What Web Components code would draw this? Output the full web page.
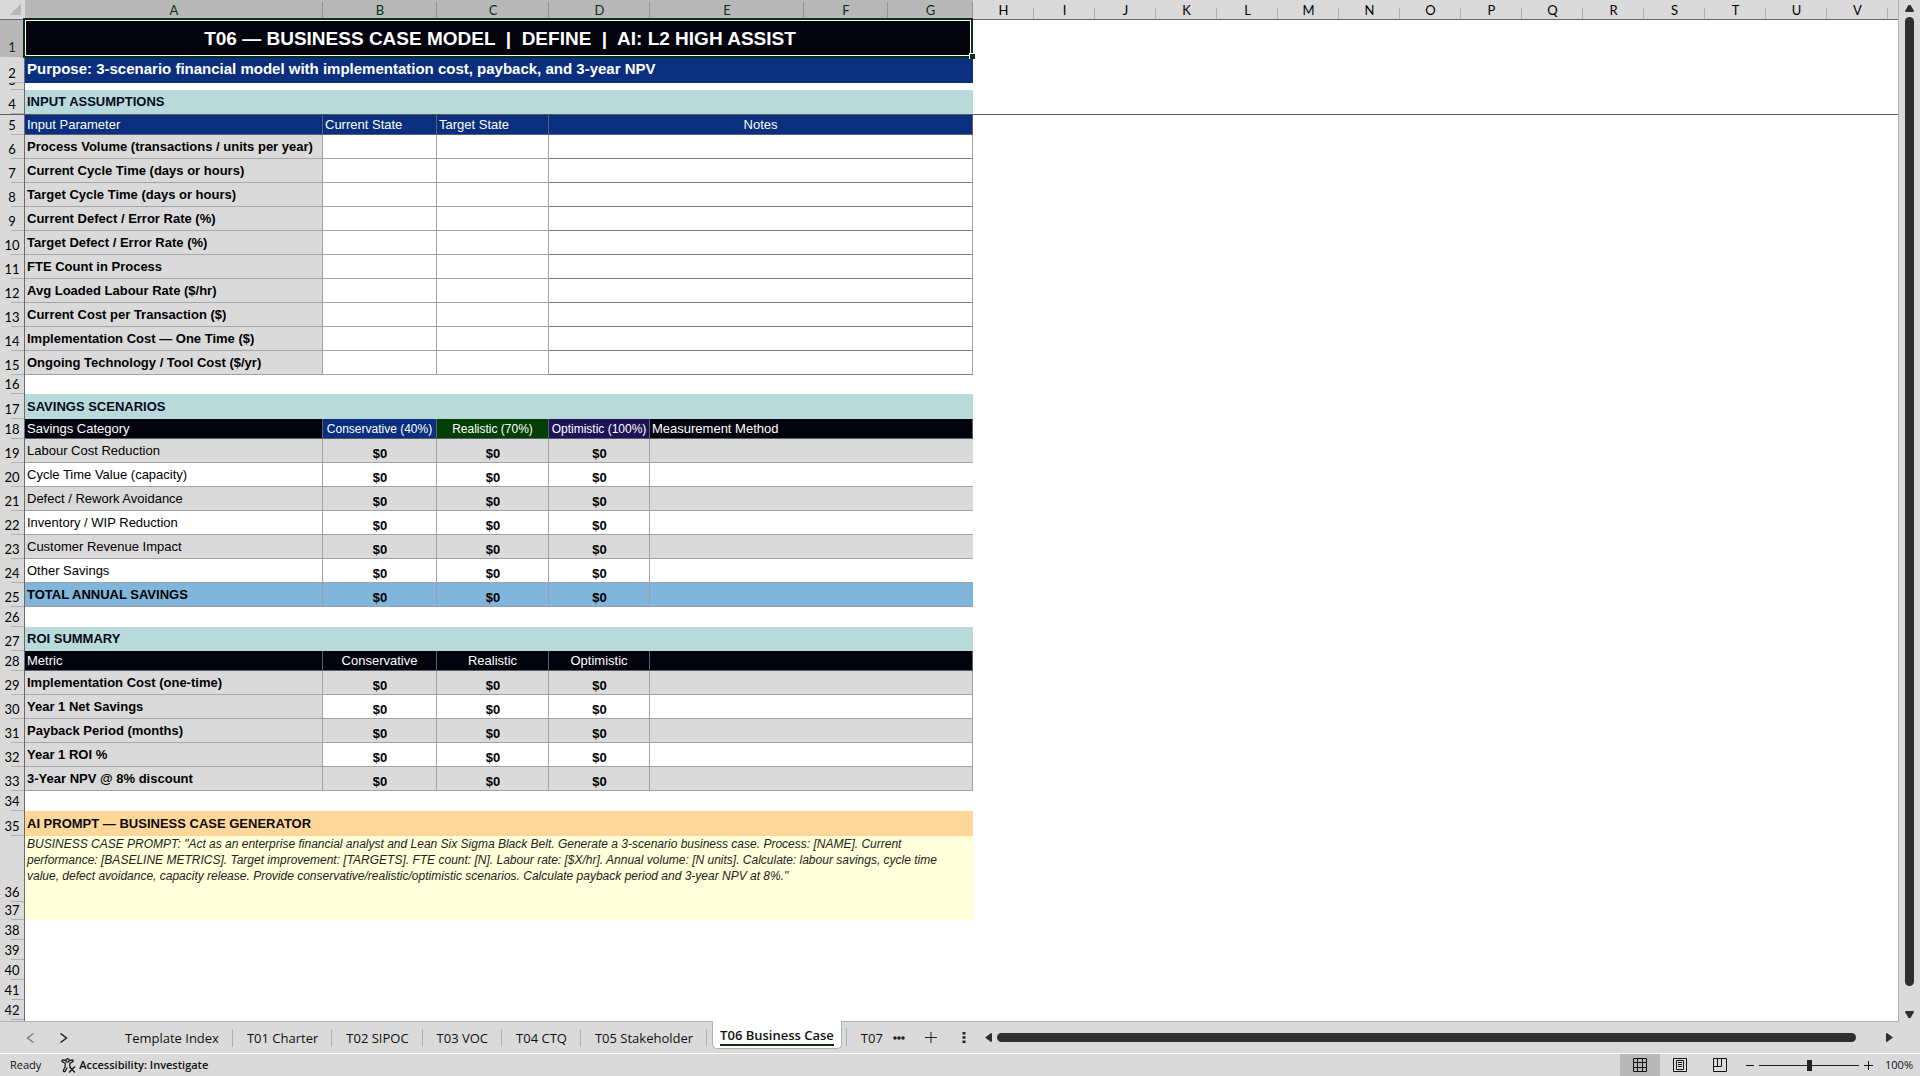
<!DOCTYPE html>
<html lang="en">
<head>
<meta charset="utf-8">
<title>T06 Business Case</title>
<style>
html, body { height: 100%; margin: 0; }
body {
  --chrome: #dadada; --chrome-on: #b8b8b8; --rule: #b0b0b0; --rule-dark: #6a6a6a;
  --ink: #2f2f2f; --green: #0a3016;
  --ui: "Open Sans", "Noto Sans", sans-serif;
  font-family: var(--ui); color: #111; background: var(--chrome);
}
</style>
</head>
<body>
<workbook-window>
  <sheet-grid></sheet-grid>
  <scroll-bar slot="side" vertical></scroll-bar>
  <sheet-tabs slot="tabs">
    <sheet-tab>Template Index</sheet-tab>
    <sheet-tab>T01 Charter</sheet-tab>
    <sheet-tab>T02 SIPOC</sheet-tab>
    <sheet-tab>T03 VOC</sheet-tab>
    <sheet-tab>T04 CTQ</sheet-tab>
    <sheet-tab>T05 Stakeholder</sheet-tab>
    <sheet-tab active>T06 Business Case</sheet-tab>
    <sheet-tab last>T07</sheet-tab>
    <scroll-bar slot="scroll"></scroll-bar>
  </sheet-tabs>
  <status-bar slot="status"></status-bar>
</workbook-window>

<script>
const shadow = (el, html) => { el.attachShadow({ mode: "open" }).innerHTML = html; return el.shadowRoot; };
const RESET = `button { all: unset; box-sizing: border-box; cursor: pointer; } svg { display: block; }`;

customElements.define("workbook-window", class extends HTMLElement {
  constructor() {
    super();
    shadow(this, `<style>
      :host { display: flex; flex-direction: column; height: 100vh; overflow: hidden; }
      .main { flex: 1; min-height: 0; display: flex; }
      ::slotted(sheet-grid) { flex: 1; min-width: 0; }
    </style>
    <div class="main"><slot></slot><slot name="side"></slot></div>
    <slot name="tabs"></slot><slot name="status"></slot>`);
  }
});

/* Each row: [height, html of the cells A..G]; the columns after G are one blank run. */
const td = (text, cls = "", span = 1) => `<td class="${cls}"${span > 1 ? ` colspan="${span}"` : ""}>${text}</td>`;
const blank = h => [h, td("", "", 7)];
const inputs = ["Process Volume (transactions / units per year)", "Current Cycle Time (days or hours)",
  "Target Cycle Time (days or hours)", "Current Defect / Error Rate (%)", "Target Defect / Error Rate (%)",
  "FTE Count in Process", "Avg Loaded Labour Rate ($/hr)", "Current Cost per Transaction ($)",
  "Implementation Cost — One Time ($)", "Ongoing Technology / Tool Cost ($/yr)"];
const savings = ["Labour Cost Reduction", "Cycle Time Value (capacity)", "Defect / Rework Avoidance",
  "Inventory / WIP Reduction", "Customer Revenue Impact", "Other Savings"];
const metrics = ["Implementation Cost (one-time)", "Year 1 Net Savings", "Payback Period (months)",
  "Year 1 ROI %", "3-Year NPV @ 8% discount"];
const zeros = cls => td("$0", "v " + cls).repeat(3);
const prompt = `BUSINESS CASE PROMPT: "Act as an enterprise financial analyst and Lean Six Sigma Black Belt. Generate a 3-scenario business case. Process: [NAME]. Current<br>performance: [BASELINE METRICS]. Target improvement: [TARGETS]. FTE count: [N]. Labour rate: [$X/hr]. Annual volume: [N units]. Calculate: labour savings, cycle time<br>value, defect avoidance, capacity release. Provide conservative/realistic/optimistic scenarios. Calculate payback period and 3-year NPV at 8%."`;
const rows = [
  [37, td("T06 — BUSINESS CASE MODEL  |  DEFINE  |  AI: L2 HIGH ASSIST", "title", 7)],
  [26, td("Purpose: 3-scenario financial model with implementation cost, payback, and 3-year NPV", "purpose", 7)],
  blank(7),
  [25, td("INPUT ASSUMPTIONS", "section", 7)],
  [20, td("Input Parameter", "h blue b") + td("Current State", "h blue b") + td("Target State", "h blue b") + td("Notes", "h blue b c", 4)],
  ...inputs.map(t => [24, td(t, "l s g b") + td("", "b") + td("", "b") + td("", "b note", 4)]),
  blank(19),
  [25, td("SAVINGS SCENARIOS", "section", 7)],
  [20, td("Savings Category", "h black b") + td("Conservative (40%)", "h blue b c sm") + td("Realistic (70%)", "h forest b c sm") + td("Optimistic (100%)", "h violet b c sm") + td("Measurement Method", "h black b", 3)],
  ...savings.map((t, i) => { const g = i % 2 ? "b" : "g b"; return [24, td(t, "l " + g) + zeros(g) + td("", g + " open", 3)]; }),
  [24, td("TOTAL ANNUAL SAVINGS", "l s sky b") + zeros("sky b") + td("", "sky b open", 3)],
  blank(20),
  [24, td("ROI SUMMARY", "section", 7)],
  [20, td("Metric", "h black b") + td("Conservative", "h black b c") + td("Realistic", "h black b c") + td("Optimistic", "h black b c") + td("", "h black b", 3)],
  ...metrics.map((t, i) => { const g = i % 2 ? "b" : "g b"; return [24, td(t, "l s g b") + zeros(g) + td("", g, 3)]; }),
  blank(20),
  [25, td("AI PROMPT — BUSINESS CASE GENERATOR", "section amber", 7)],
  [66, td(prompt, "prompt", 7)],
  [18, td("", "cream", 7)],
  blank(20), blank(20), blank(20), blank(20), blank(20)
];

customElements.define("sheet-grid", class extends HTMLElement {
  constructor() {
    super();
    const letters = [..."ABCDEFGHIJKLMNOPQRSTUV"];
    const widths = [298, 114, 112, 101, 154, 84, 85];
    shadow(this, `<style>
      :host { display: block; overflow: hidden; background: #fff; border-right: 1px solid var(--rule); border-bottom: 1px solid var(--rule); box-sizing: border-box; }
      .fill { height: 100%; background: linear-gradient(90deg, var(--chrome) 24px, var(--rule-dark) 24px 25px, #fff 25px); }
      table { table-layout: fixed; width: 100%; border-spacing: 0; font: 13px/16px "Liberation Sans", Arial, sans-serif; color: #000; white-space: pre; }
      th, td { box-sizing: border-box; padding: 0; height: inherit; }
      thead th { height: 20px; font: 13px/16px Lato, sans-serif; padding-top: 1px; border-bottom: 1px solid var(--rule-dark); background: linear-gradient(var(--rule), var(--rule)) right bottom / 1px 11px no-repeat var(--chrome); }
      thead th.on { color: var(--green); background: linear-gradient(#949494, #949494) right bottom / 1px 17px no-repeat var(--chrome-on); }
      thead .corner { background: linear-gradient(135deg, transparent 50%, #b8b8b8 50%) 10px 4px / 11px 11px no-repeat var(--chrome); }
      tbody th { font: 13px/16px Lato, sans-serif; vertical-align: bottom; border-right: 1px solid var(--rule-dark); background: linear-gradient(var(--rule), var(--rule)) right bottom / 13px 1px no-repeat var(--chrome); }
      tbody tr:first-child th { background-color: var(--chrome-on); color: var(--green); }
      th span { display: flex; flex-direction: column; justify-content: flex-end; align-items: center; max-height: var(--h); overflow: hidden; box-sizing: border-box; padding-bottom: 2px; }
      td { padding-left: 2px; vertical-align: middle; }
      tr.freeze > * { border-bottom: 1px solid #5c5c5c; }
      .title { position: relative; background: #03030d; color: #fff; font-weight: bold; font-size: 19px; line-height: 24px; text-align: center; }
      .title::before { content: ""; position: absolute; inset: -2px 0 -1px -2px; border: 2px solid var(--green); outline: 1px solid #fff; outline-offset: -3px; }
      .title::after { content: ""; position: absolute; right: -2px; bottom: -2px; width: 5px; height: 5px; background: var(--green); border: 1px solid #fff; border-width: 1px 0 0 1px; }
      .purpose { background: #092f7e; color: #fff; font-weight: bold; font-size: 15px; padding-bottom: 2px; }
      .section { background: #b8dada; color: #050a1c; font-weight: bold; }
      .amber { background: #ffd899; color: #0a0a14; }
      .b { border-right: 1px solid #a2a2a2; border-bottom: 1px solid #a2a2a2; }
      .g { background: #dadada; }
      .s { font-weight: bold; }
      .l { padding-top: 1px; }
      .c { text-align: center; padding: 0; }
      .h { color: #fff; border-color: #5b5f6b; }
      .sm { font-size: 12px; }
      .blue { background: #092f7e; }
      .black { background: #03030d; }
      .forest { background: #033f04; }
      .violet { background: #1d1356; }
      .sky { background: #80b6db; border-color: #9b9bab; }
      .open { border-right: 0; }
      .note { border-bottom-color: #7d7d7d; }
      .v { font-weight: bold; text-align: center; vertical-align: bottom; padding: 0 0 0 1px; }
      .prompt { background: #ffffd9; color: #222; font-size: 12px; font-style: italic; vertical-align: top; }
      .cream { background: #ffffd9; }
    </style>
    <div class="fill"><table>
      <colgroup><col style="width:25px">${letters.map((_, i) => `<col style="width:${widths[i] || 61}px">`).join("")}<col></colgroup>
      <thead><tr><th class="corner"></th>${letters.map((l, i) => `<th scope="col" class="${i < 7 ? "on" : ""}">${l}</th>`).join("")}<th style="background:var(--chrome)"></th></tr></thead>
      <tbody>${rows.map(([h, cells], i) => `<tr style="height:${h}px;--h:${h}px"${i === 3 ? ' class="freeze"' : ""}><th scope="row"><span>${i + 1}</span></th>${cells}<td colspan="16"></td></tr>`).join("")}</tbody>
    </table></div>`);
  }
});

customElements.define("scroll-bar", class extends HTMLElement {
  constructor() {
    super();
    shadow(this, `<style>${RESET}
      :host { flex: 1; display: flex; align-items: center; gap: 5px; padding-right: 27px; }
      .track { flex: 1; display: flex; }
      .thumb { flex: 1; height: 9px; border-radius: 5px; background: var(--ink); margin-right: 25px; }
      svg { fill: var(--ink); width: 7px; height: 9px; }
      :host([vertical]) { flex: none; flex-direction: column; width: 21px; padding: 5px 0 4px; box-sizing: border-box; }
      :host([vertical]) .track { width: 9px; }
      :host([vertical]) .thumb { width: 9px; height: auto; margin: 0 0 20px; }
      :host([vertical]) svg { width: 9px; height: 7px; }
      .v { display: none; }
      :host([vertical]) .v { display: block; }
      :host([vertical]) .x { display: none; }
    </style>
    <button aria-label="Scroll back">
      <svg class="x" viewBox="0 0 7 9"><path d="M7 1v7q0 1-1 1L0 4.500 6 0q1 0 1 1z"/></svg>
      <svg class="v" viewBox="0 0 9 7"><path d="M1 7h7q1 0 1-1L5.500 0h-2L0 6q0 1 1 1z"/></svg>
    </button>
    <div class="track"><div class="thumb"></div></div>
    <button aria-label="Scroll forward">
      <svg class="x" viewBox="0 0 7 9"><path d="M0 1v7q0 1 1 1l6-4.500L1 0Q0 0 0 1z"/></svg>
      <svg class="v" viewBox="0 0 9 7"><path d="M1 0h7q1 0 1 1L5.500 7h-2L0 1q0-1 1-1z"/></svg>
    </button>`);
  }
});

customElements.define("sheet-tab", class extends HTMLElement {
  constructor() {
    super();
    shadow(this, `<style>${RESET}
      :host { display: flex; align-items: center; height: 31px; }
      button { font: 13px/18px var(--ui); padding: 0 13px 0 14px; white-space: nowrap; }
      :host::after { content: ""; width: 1px; height: 18px; background: var(--rule); }
      :host([last])::after { display: none; }
      :host([last]) button { padding-right: 10px; }
      :host([active]) { margin-left: 5px; align-items: flex-start; }
      :host([active]) button { height: 28px; padding: 3px 7px 0; background: #fff; border: 1px solid var(--rule); border-top: 0; border-radius: 0 0 5px 5px; font-weight: 600; margin-top: -1px; margin-right: 4px; }
      :host([active]) span { display: block; border-bottom: 2px solid var(--green); }
      :host([active])::after { margin-top: 6px; }
    </style><button role="tab"><span><slot></slot></span></button>`);
  }
});

customElements.define("sheet-tabs", class extends HTMLElement {
  constructor() {
    super();
    shadow(this, `<style>${RESET}
      :host { display: flex; align-items: center; height: 32px; box-sizing: border-box; border-bottom: 1px solid #fff; background: var(--chrome); }
      .nav { display: flex; gap: 24px; padding: 0 43px 0 26px; }
      .tabs { display: flex; height: 31px; }
      .tools { display: flex; align-items: center; gap: 20px; padding-right: 19px; }
      svg { fill: none; stroke: #222; }
    </style>
    <div class="nav">
      <button aria-label="Previous sheet"><svg width="9" height="10" viewBox="0 0 9 10" stroke-width="1.300" style="stroke:#777"><path d="M7.500 .5 1.500 5l6 4.500"/></svg></button>
      <button aria-label="Next sheet"><svg width="9" height="10" viewBox="0 0 9 10" stroke-width="1.500"><path d="M1.500 .5l6 4.500-6 4.500"/></svg></button>
    </div>
    <div class="tabs" role="tablist"><slot></slot></div>
    <div class="tools">
      <button aria-label="More sheets"><svg width="12" height="4" viewBox="0 0 12 4" style="fill:#222;stroke:none"><circle cx="2" cy="2" r="1.800"/><circle cx="6" cy="2" r="1.800"/><circle cx="10" cy="2" r="1.800"/></svg></button>
      <button aria-label="New sheet"><svg width="12" height="11" viewBox="0 0 12 11"><path d="M6 0v11M0 5.500h12"/></svg></button>
      <button aria-label="Resize tab area" style="padding:0 0 0 5px"><svg width="4" height="11" viewBox="0 0 4 11" style="fill:#222;stroke:none"><path d="M.5 0h3v2.500h-3zM.5 4.200h3v2.500h-3zM.5 8.400h3v2.500h-3z"/></svg></button>
    </div>
    <slot name="scroll"></slot>`);
  }
});

customElements.define("status-bar", class extends HTMLElement {
  constructor() {
    super();
    shadow(this, `<style>${RESET}
      :host { display: flex; align-items: stretch; height: 22px; background: var(--chrome); font: 11px/20px var(--ui); }
      .left { display: flex; align-items: center; flex: 1; gap: 20px; padding-left: 10px; }
      .acc { display: flex; align-items: center; gap: 3px; font-weight: 600; }
      .view { width: 40px; display: flex; align-items: center; justify-content: center; }
      .view.on { background: var(--chrome-on); }
      svg { fill: none; stroke: #111; }
      .zoom { display: flex; align-items: center; gap: 5px; padding: 0 7px 0 6px; }
      input { appearance: none; width: 100px; height: 11px; margin: 0; background: linear-gradient(#222, #222) center / 100% 1px no-repeat; }
      input::-webkit-slider-thumb { appearance: none; width: 5px; height: 11px; background: #222; }
      .pct { margin-left: 7px; }
    </style>
    <div class="left"><span>Ready</span>
      <button class="acc"><svg width="15" height="15" viewBox="0 0 15 15" stroke-width="1.200"><circle cx="6.500" cy="2.500" r="1.700"/><path d="M4.800 2.600 2 1.900Q.6 2.300 1 3.600L4.200 5.300V8.500L2.300 12.600Q2.600 14.200 4 13.500L6.300 9.500M8.200 2.600l3-.7q1.300.4.8 1.700L8.800 5.300V8l1 1.500M8.500 9l5.500 5.500M14 8.500 8 14.500"/></svg><span>Accessibility: Investigate</span></button>
    </div>
    <button class="view on" aria-label="Normal"><svg width="14" height="14" viewBox="0 0 14 14"><path d="M.5.5h13v13H.5zM.5 4.500h13M.5 9.500h13M4.500 0v14M9.500 0v14"/></svg></button>
    <button class="view" aria-label="Page layout"><svg width="14" height="14" viewBox="0 0 14 14"><path d="M.5.5h13v13H.5zM3.500 2.500h7v9h-7zM5 4.500h4M5 6.500h4M5 8.500h4"/></svg></button>
    <button class="view" aria-label="Page break preview"><svg width="14" height="14" viewBox="0 0 14 14"><path d="M.5.5h13v13H.5zM.5 8.500h8V.5M4.500.5v8"/></svg></button>
    <div class="zoom">
      <button aria-label="Zoom out"><svg width="8" height="9" viewBox="0 0 8 9"><path d="M0 4.500h8"/></svg></button>
      <input type="range" min="0" max="100" value="50" aria-label="Zoom">
      <button aria-label="Zoom in"><svg width="9" height="9" viewBox="0 0 9 9"><path d="M0 4.500h9M4.500 0v9"/></svg></button>
      <button class="pct">100%</button>
    </div>`);
  }
});
</script>
</body>
</html>
